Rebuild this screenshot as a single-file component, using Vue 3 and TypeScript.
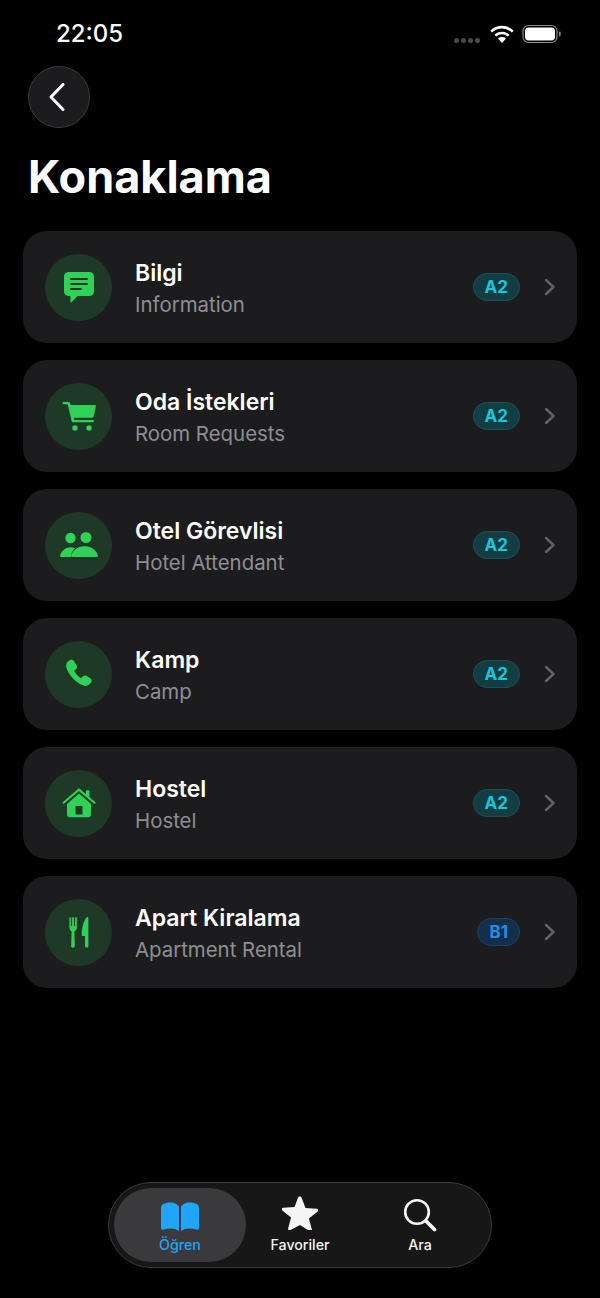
<script setup lang="ts">
interface Lesson {
  title: string;
  subtitle: string;
  level: "A2" | "B1";
  icon: string;
}

const lessons: Lesson[] = [
  { title: "Bilgi", subtitle: "Information", level: "A2", icon: "chat" },
  { title: "Oda İstekleri", subtitle: "Room Requests", level: "A2", icon: "cart" },
  { title: "Otel Görevlisi", subtitle: "Hotel Attendant", level: "A2", icon: "people" },
  { title: "Kamp", subtitle: "Camp", level: "A2", icon: "phone" },
  { title: "Hostel", subtitle: "Hostel", level: "A2", icon: "house" },
  { title: "Apart Kiralama", subtitle: "Apartment Rental", level: "B1", icon: "fork" },
];
</script>

<template>
  <div class="screen">
    <div class="status">
      <span class="time">22:05</span>
      <div class="status-icons">
        <div class="dots"><i /><i /><i /><i /></div>
        <svg width="24" height="18" viewBox="0 0 24 18" fill="none" stroke="#fff" stroke-width="2.600">
          <path d="M1.200 6.600C7.200.6 16.800.6 22.800 6.600" />
          <path d="M5.300 10.700C9 7 15 7 18.700 10.700" />
          <path fill="#fff" stroke="none" d="M12 18l-4-4.500c2.300-1.900 5.700-1.900 8 0z" />
        </svg>
        <svg width="40" height="20" viewBox="0 0 40 20">
          <rect x="1" y="1.500" width="34" height="17" rx="5.500" fill="none" stroke="#8c8c8c" stroke-width="1.200" />
          <rect x="3" y="3.500" width="30" height="13" rx="3.800" fill="#fff" />
          <rect x="37" y="7.500" width="1.600" height="5" rx="0.800" fill="#8c8c8c" />
        </svg>
      </div>
    </div>

    <button class="back" type="button" aria-label="Geri">
      <svg width="18" height="28" viewBox="0 0 18 28" fill="none" stroke="#fff" stroke-width="3" stroke-linecap="round" stroke-linejoin="round">
        <path d="M15 1.500 3 14l12 12.500" />
      </svg>
    </button>

    <h1 class="page-title">Konaklama</h1>

    <div class="list">
      <div v-for="lesson in lessons" :key="lesson.title" class="card">
        <div class="icon-wrap">
          <svg v-if="lesson.icon === 'chat'" width="32" height="32" viewBox="0 0 32 32">
            <path fill="#30d158" d="M5.500 1h21A4.500 4.500 0 0 1 31 5.500v15a4.500 4.500 0 0 1-4.500 4.500H14.500l-6 6.200c-.5.400-1.100.100-1.100-.6V25H5.500A4.500 4.500 0 0 1 1 20.500v-15A4.500 4.500 0 0 1 5.500 1z" />
            <path stroke="#1e3a26" stroke-width="2" stroke-linecap="round" d="M8 8h16M8 13h16M8 18h10" />
          </svg>
          <svg v-else-if="lesson.icon === 'cart'" width="34" height="30" viewBox="0 0 34 30" fill="#30d158">
            <path d="M1.500 1h5c.8 0 1.400.5 1.600 1.300L8.600 4H33c.6 0 1 .5.900 1.100l-2.100 10.200c-.2.900-1 1.500-1.900 1.500H11.900l.4 2.200h18.500c.7 0 1.200.5 1.200 1.100s-.5 1.100-1.200 1.100H11.200c-.8 0-1.400-.5-1.600-1.300L5.700 3.200H1.500C.9 3.200.4 2.700.4 2.100S.9 1 1.500 1z" />
            <circle cx="13" cy="27" r="2.700" />
            <circle cx="27" cy="27" r="2.700" />
          </svg>
          <svg v-else-if="lesson.icon === 'people'" width="38" height="26" viewBox="0 0 38 26" fill="#30d158">
            <circle cx="10.500" cy="6" r="5.200" />
            <circle cx="26" cy="5.500" r="5.500" />
            <path d="M1.200 25C.3 25 0 24.300.200 23.500c.9-4 4.700-8.300 10.300-8.300 1.700 0 3.200.4 4.500 1-2.200 2-3.600 4.700-4 7.300-.1.600 0 1.100.2 1.500z" />
            <path d="M13.800 25c-.9 0-1.400-.7-1.200-1.500 1-4.500 6-9.300 13.400-9.300s12.400 4.800 13.400 9.300c.2.800-.3 1.500-1.200 1.500z" transform="translate(-1.500 0)" />
          </svg>
          <svg v-else-if="lesson.icon === 'phone'" width="30" height="30" viewBox="0 0 28 28" fill="#30d158">
            <path d="M5.500 1c1.500-.7 3-.2 3.800 1l2.500 4c.7 1.200.5 2.500-.5 3.400l-1.800 1.600c1.500 3 3.500 5.200 6.500 6.900l1.700-1.700c1-1 2.400-1.100 3.500-.4l3.600 2.400c1.300.9 1.500 2.700.4 3.800l-1.600 1.600c-1.600 1.600-3.800 1.900-5.800 1C11 22 5 15 2.500 9 1.500 6.500 2 4 3.600 2.300z" />
          </svg>
          <svg v-else-if="lesson.icon === 'house'" width="34" height="30" viewBox="0 0 34 30" fill="#30d158">
            <path fill-rule="evenodd" d="M17 5.600 29 16v10.500c0 1.700-1.100 2.800-2.800 2.800H7.800C6.100 29.300 5 28.200 5 26.500V16zM14.500 18c-.6 0-1 .4-1 1v7.500h7V19c0-.6-.4-1-1-1z" />
            <path d="M17 .6c.4 0 .7.100 1 .4l6 5.200V3c0-.4.300-.7.700-.7h2c.4 0 .7.300.7.700v6.100l5.700 5c.5.400.5 1 .2 1.400-.4.400-1 .5-1.500.1L17 3.100 2.200 15.600c-.5.400-1.100.3-1.500-.1-.3-.4-.3-1 .2-1.400L16 1c.3-.3.6-.4 1-.4z" />
          </svg>
          <svg v-else width="20" height="32" viewBox="0 0 20 32" fill="#30d158">
            <path d="M.5 1c.5 0 .9.400.9.900v7.600c0 .5.300.7.600.7s.6-.2.600-.7V1.900c0-.5.400-.9.900-.9s.9.400.9.900v7.600c0 .5.300.7.600.7s.6-.2.600-.7V1.900c0-.5.400-.9.900-.9s.9.400.9.900v9.600c0 1.800-1 3.200-2.500 3.800l.4 14.700c0 1-.7 1.700-1.800 1.700s-1.800-.7-1.800-1.700l.4-14.700C.9 14.700-.1 13.300-.1 11.500V1.600C-.1 1.200.1 1 .5 1z" transform="translate(.5 0)" />
            <path d="M18 1c.8 0 1.400.5 1.400 1.300v27.600c0 1-.7 1.700-1.700 1.700s-1.700-.7-1.700-1.700V20h-2c-.8 0-1.300-.5-1.300-1.300C12.700 12 14.500 4.800 18 1z" />
          </svg>
        </div>
        <div class="text">
          <div class="title">{{ lesson.title }}</div>
          <div class="subtitle">{{ lesson.subtitle }}</div>
        </div>
        <span class="badge" :data-level="lesson.level">{{ lesson.level }}</span>
        <svg class="chevron" width="12" height="18" viewBox="0 0 12 18" fill="none" stroke="#636367" stroke-width="2.400" stroke-linecap="round" stroke-linejoin="round">
          <path d="M2 2l7.500 7L2 16" />
        </svg>
      </div>
    </div>

    <div class="tabbar-wrap">
      <nav class="tabbar">
        <div class="tab active">
          <svg width="38" height="30" viewBox="0 0 38 30" fill="#21a4fb">
            <path d="M18 4.500V29c-2.300-1.700-5-2.500-8.300-2.500-2.600 0-5 .4-7.400 1.200C1.100 28.100 0 27.200 0 26V6C0 3.800 1 2.500 2.700 1.800 4.800 1 7.200.5 9.800.5 13 .5 15.900 1.800 18 4.500z" />
            <path d="M20 4.500V29c2.300-1.700 5-2.500 8.300-2.500 2.600 0 5 .4 7.400 1.200 1.200.4 2.300-.5 2.300-1.700V6c0-2.200-1-3.500-2.700-4.200C33.200 1 30.800.5 28.200.5 25 .5 22.100 1.800 20 4.500z" />
          </svg>
          <span>Öğren</span>
        </div>
        <div class="tab">
          <svg class="star" width="36" height="34" viewBox="0 0 36 34" fill="#f5f5f5">
            <path d="M18 .5c.7 0 1.200.4 1.500 1.100l4 10.500 11.300.6c1.500.1 2 1.800.9 2.700l-8.800 7.100 3 10.900c.4 1.400-1.100 2.500-2.300 1.700L18 28.900l-9.600 5.200c-1.200.8-2.700-.3-2.300-1.700l3-10.900-8.800-7.100c-1.100-.9-.6-2.600.9-2.700l11.300-.6 4-10.500C16.800.9 17.300.5 18 .5z" />
          </svg>
          <span>Favoriler</span>
        </div>
        <div class="tab">
          <svg width="34" height="34" viewBox="0 0 34 34" fill="none" stroke="#f5f5f5" stroke-linecap="round">
            <circle cx="14" cy="14" r="11.800" stroke-width="2.600" />
            <path d="M23 23l8.500 8.500" stroke-width="3.800" />
          </svg>
          <span>Ara</span>
        </div>
      </nav>
    </div>
  </div>
</template>

<style>
html,
body {
  background: #000;
}
</style>

<style scoped>
.screen {
  width: 600px;
  height: 1298px;
  background: #000;
  color: #fff;
  font-family: Inter, "Liberation Sans", sans-serif;
  display: flex;
  flex-direction: column;
  overflow: hidden;
}

.status {
  height: 66px;
  padding: 21px 38px 0 56px;
  box-sizing: border-box;
  display: flex;
  justify-content: space-between;
  align-items: flex-start;
  flex-shrink: 0;
}

.time {
  font-size: 24px;
  font-weight: 500;
  line-height: 26px;
}

.status-icons {
  display: flex;
  align-items: center;
  gap: 8px;
  margin-top: 3px;
}

.dots {
  display: flex;
  gap: 2px;
  margin-top: 13px;
  margin-right: 2px;
}

.dots i {
  width: 5px;
  height: 5px;
  border-radius: 50%;
  background: #4a4a4a;
}

.back {
  width: 62px;
  height: 62px;
  margin-left: 28px;
  border-radius: 50%;
  border: 1px solid #3a3a3a;
  background: #1c1c1e;
  padding: 0 4px 0 0;
  display: flex;
  align-items: center;
  justify-content: center;
  flex-shrink: 0;
}

.page-title {
  margin: 22px 0 0 28px;
  font-size: 45px;
  line-height: 54px;
  font-weight: 700;
}

.list {
  margin: 27px 23px 0;
  display: flex;
  flex-direction: column;
  gap: 17px;
}

.card {
  height: 112px;
  box-sizing: border-box;
  background: #1c1c1e;
  border-radius: 24px;
  padding: 0 22px;
  display: flex;
  align-items: center;
}

.icon-wrap {
  width: 67px;
  height: 67px;
  border-radius: 50%;
  background: #1e3a26;
  display: flex;
  align-items: center;
  justify-content: center;
  flex-shrink: 0;
}

.text {
  flex: 1;
  margin-left: 23px;
  padding-top: 2px;
}

.title {
  font-size: 23px;
  line-height: 30px;
  font-weight: 600;
}

.subtitle {
  margin-top: 4px;
  font-size: 20.4px;
  line-height: 26px;
  color: #8e8e93;
}

.badge {
  height: 28px;
  box-sizing: border-box;
  padding: 0 11px;
  border-radius: 14px;
  font-size: 17px;
  font-weight: 700;
  line-height: 26px;
  border: 1px solid;
}

.badge[data-level="A2"] {
  color: #14c8dc;
  background: #123d42;
  border-color: #1a5156;
}

.badge[data-level="B1"] {
  color: #1e90ea;
  background: #132f49;
  border-color: #1c4263;
}

.chevron {
  margin-left: 24px;
  margin-right: -1px;
  flex-shrink: 0;
}

.tabbar-wrap {
  margin-top: auto;
  padding-bottom: 30px;
  display: flex;
  justify-content: center;
}

.tabbar {
  width: 384px;
  height: 86px;
  box-sizing: border-box;
  padding: 5px;
  border-radius: 43px;
  background: #171718;
  border: 1px solid #3a3a3a;
  display: grid;
  grid-template-columns: 132px 108px 1fr;
}

.tab {
  display: flex;
  flex-direction: column;
  align-items: center;
  justify-content: flex-end;
  padding-bottom: 9px;
  gap: 4px;
  font-size: 14.2px;
  font-weight: 500;
  color: #f5f5f5;
  border-radius: 38px;
}

.star {
  margin-bottom: 2px;
}

.tab.active {
  background: #3a3a3c;
  color: #21a4fb;
}
</style>
